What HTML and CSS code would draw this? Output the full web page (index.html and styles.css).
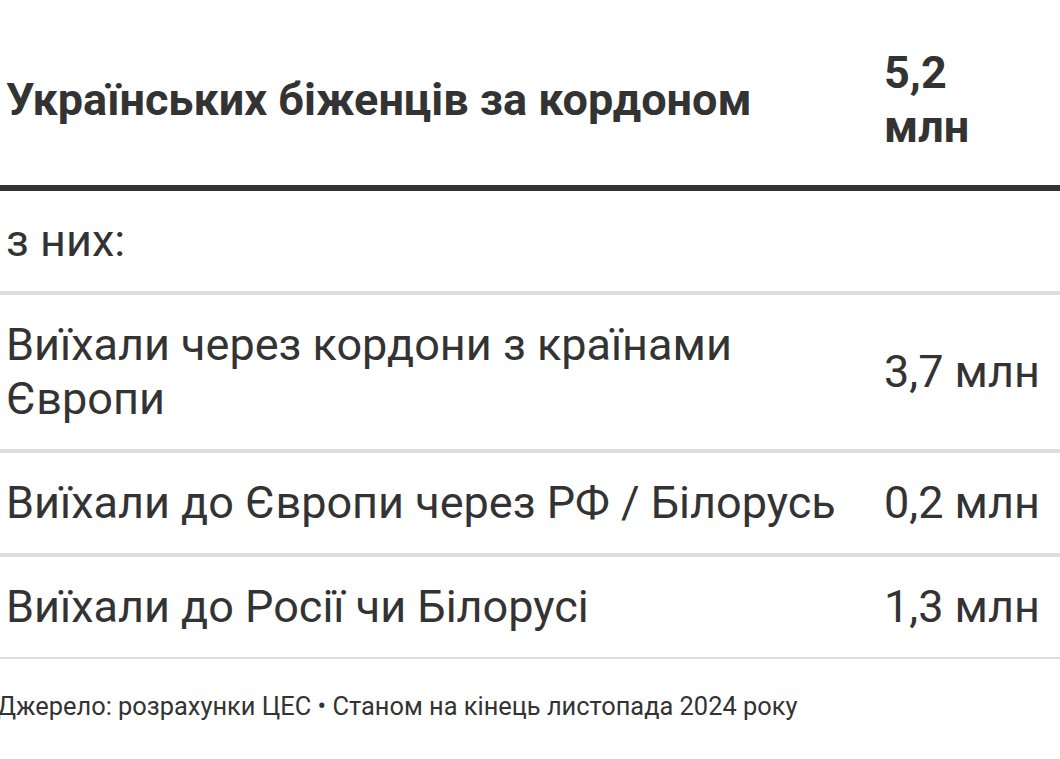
FILE: index.html
```html
<!DOCTYPE html>
<html lang="uk">
<head>
<meta charset="utf-8">
<title>Українських біженців за кордоном</title>
<link rel="stylesheet" href="styles.css">
</head>
<body>
<div class="wrap">
  <table class="data">
    <colgroup>
      <col class="col-label">
      <col class="col-value">
    </colgroup>
    <thead>
      <tr>
        <th class="label">Українських біженців за кордоном</th>
        <th class="value">5,2 млн</th>
      </tr>
    </thead>
    <tbody>
      <tr>
        <td class="label">з них:</td>
        <td class="value"></td>
      </tr>
      <tr>
        <td class="label">Виїхали через кордони з країнами Європи</td>
        <td class="value nowrap">3,7 млн</td>
      </tr>
      <tr>
        <td class="label">Виїхали до Європи через РФ / Білорусь</td>
        <td class="value nowrap">0,2 млн</td>
      </tr>
      <tr class="last">
        <td class="label">Виїхали до Росії чи Білорусі</td>
        <td class="value nowrap">1,3 млн</td>
      </tr>
    </tbody>
  </table>
  <p class="source">Джерело: розрахунки ЦЕС • Станом на кінець листопада 2024 року</p>
</div>
</body>
</html>
```

FILE: styles.css
```css
html, body {
  margin: 0;
  padding: 0;
  background: #ffffff;
}

body {
  font-family: Roboto, "Noto Sans", "Liberation Sans", sans-serif;
  color: #333333;
}

.wrap {
  padding-top: 23px;
  width: 1060px;
  overflow: hidden;
}

.data {
  width: 1060px;
  border-collapse: collapse;
  table-layout: fixed;
}

.col-label {
  width: 878px;
}

.col-value {
  width: 182px;
}

.data th,
.data td {
  text-align: left;
  vertical-align: middle;
  padding: 23px 18px 23px 6px;
  font-size: 45px;
  line-height: 54px;
  border-bottom: 4px solid #dddddd;
}

.data td.label,
.data th.label {
  padding-right: 8px;
}

.data th {
  font-weight: 700;
  padding-top: 23px;
  padding-bottom: 31px;
  border-bottom: 6px solid #333333;
}

.data td {
  font-weight: 400;
}

.data tr.last td {
  border-bottom: 2px solid #dddddd;
}

.nowrap {
  white-space: nowrap;
}

.source {
  margin: 31px 0 0 -3px;
  font-size: 25.4px;
  line-height: 32px;
  color: #333333;
}
```
